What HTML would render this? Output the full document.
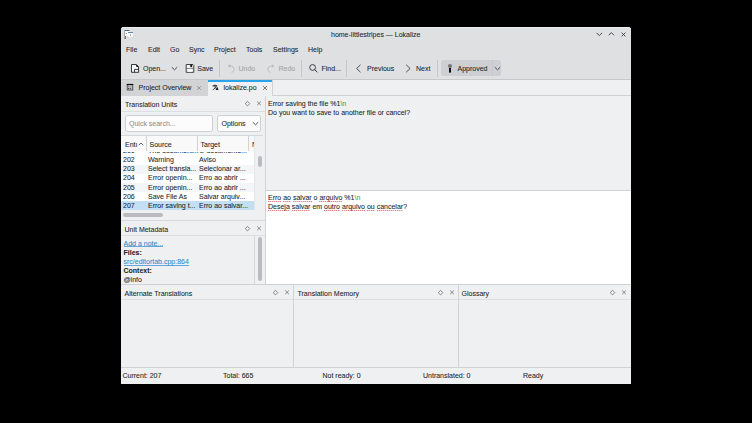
<!DOCTYPE html>
<html><head><meta charset="utf-8">
<style>
*{margin:0;padding:0;box-sizing:border-box}
html,body{width:752px;height:423px;background:#000;overflow:hidden}
body{font-family:"Liberation Sans",sans-serif;font-size:7px;color:#232629;position:relative}
.a{position:absolute}
.t{position:absolute;white-space:nowrap;line-height:9px;-webkit-text-stroke:0.07px currentColor}
.sp{padding-bottom:1px;background:repeating-linear-gradient(90deg,rgba(225,80,90,.7) 0 1px,rgba(225,80,90,.3) 1px 2px) 0 100%/100% 1px no-repeat}
.g{color:#a3a5a7}
.hl{position:absolute;height:1px;background:#d0d2d4}
.vl{position:absolute;width:1px;background:#d0d2d4}
.sep{position:absolute;width:1px;background:#c6c8ca;top:60px;height:17px}
svg{position:absolute;overflow:visible}
.lnk{color:#2f8bcb;text-decoration:none;background:linear-gradient(#5ea8dc,#5ea8dc) 0 7.5px/100% 1px no-repeat}
.b{font-weight:bold}
</style></head><body>
<!-- window -->
<div class="a" style="left:121px;top:27px;width:510px;height:357px;background:#eff0f1;border-radius:3px 3px 0 0"></div>
<!-- header -->
<div class="a" style="left:121px;top:27px;width:510px;height:52px;background:#dee0e2;border-radius:3px 3px 0 0;border-top:1px solid #eceded"></div>
<div class="hl" style="left:121px;top:79px;width:510px;background:#c6c8ca"></div>

<!-- app icon -->
<svg style="left:124px;top:29px" width="10" height="10" viewBox="0 0 10 10">
  <rect x="0.5" y="1" width="1.5" height="9" fill="#6e7378"/>
  <rect x="1" y="1" width="4.5" height="6" fill="#fcfcfc"/>
  <rect x="1" y="1" width="4.5" height="1" fill="#4d6a80"/>
  <rect x="4" y="3" width="5" height="5" fill="#fcfcfc"/>
  <rect x="4" y="3" width="5" height="1" fill="#5f8aa5"/>
  <rect x="2.2" y="4" width="0.8" height="1" fill="#777"/>
  <rect x="6" y="5.5" width="1" height="1.2" fill="#777"/>
</svg>
<div class="t" style="left:331px;top:30px">home-littlestripes — Lokalize</div>
<!-- window controls -->
<svg style="left:595px;top:31px" width="36" height="8" viewBox="0 0 36 8">
  <path d="M1.6 1.9 L4.3 4.6 L7 1.9" stroke="#404346" stroke-width="0.95" fill="none"/>
  <path d="M13.6 4.3 L16.3 1.6 L19 4.3" stroke="#404346" stroke-width="0.95" fill="none"/>
  <path d="M26.6 1.6 L30.4 5.4 M30.4 1.6 L26.6 5.4" stroke="#404346" stroke-width="0.95" fill="none"/>
</svg>

<!-- menu -->
<div class="t" style="left:126px;top:45px">File</div>
<div class="t" style="left:148px;top:45px">Edit</div>
<div class="t" style="left:170px;top:45px">Go</div>
<div class="t" style="left:189px;top:45px">Sync</div>
<div class="t" style="left:214px;top:45px">Project</div>
<div class="t" style="left:246px;top:45px">Tools</div>
<div class="t" style="left:273px;top:45px">Settings</div>
<div class="t" style="left:308px;top:45px">Help</div>

<!-- toolbar -->
<svg style="left:130px;top:63px" width="10" height="10" viewBox="0 0 10 10">
  <path d="M1.5 1.5 H6.3 L8.6 3.8 V9.3 H1.5 Z" stroke="#2a2d31" stroke-width="0.95" fill="#f6f7f7"/>
  <path d="M6 1.2 L8.9 4.1 L6.4 4.1 Z" fill="#111"/>
  <path d="M4.5 9.3 V6.4 H8.6" stroke="#2a2d31" stroke-width="0.95" fill="none"/>
</svg>
<div class="t" style="left:143px;top:64px">Open...</div>
<svg style="left:171px;top:66px" width="7" height="5" viewBox="0 0 7 5">
  <path d="M0.8 1.2 L3.5 3.8 L6.2 1.2" stroke="#3b3e42" stroke-width="0.9" fill="none"/>
</svg>
<svg style="left:185px;top:63px" width="10" height="10" viewBox="0 0 10 10">
  <path d="M1.2 1.5 H8 L8.8 2.3 V9.3 H1.2 Z" stroke="#404346" stroke-width="1" fill="#f0f1f2"/>
  <rect x="5.3" y="1.5" width="1.9" height="2.6" fill="#111"/>
  <rect x="1.2" y="5" width="7.6" height="0.8" fill="#55585b"/>
  <rect x="2.8" y="5.8" width="4.2" height="3" fill="#fafafa"/>
</svg>
<div class="t" style="left:197.3px;top:64px">Save</div>
<div class="sep" style="left:219px"></div>
<svg style="left:227px;top:64px" width="8" height="9" viewBox="0 0 8 9">
  <path d="M0.8 2 L3.1 0.2 L3.1 3.8 Z" fill="#b5b7b9"/>
  <path d="M3 2 C5.5 2 7.2 3.4 7.2 5.4 C7.2 7 6 8 4.6 8.3" stroke="#b5b7b9" stroke-width="0.9" fill="none"/>
</svg>
<div class="t g" style="left:238.5px;top:64px">Undo</div>
<svg style="left:267px;top:64px" width="8" height="9" viewBox="0 0 8 9">
  <path d="M7.2 2 L4.9 0.2 L4.9 3.8 Z" fill="#b5b7b9"/>
  <path d="M5 2 C2.5 2 0.8 3.4 0.8 5.4 C0.8 7 2 8 3.4 8.3" stroke="#b5b7b9" stroke-width="0.9" fill="none"/>
</svg>
<div class="t g" style="left:278.5px;top:64px">Redo</div>
<div class="sep" style="left:301px"></div>
<svg style="left:309px;top:64px" width="9" height="9" viewBox="0 0 9 9">
  <circle cx="3.6" cy="3.5" r="2.9" stroke="#232629" stroke-width="0.85" fill="none"/>
  <path d="M5.7 5.6 L8.3 8.2" stroke="#232629" stroke-width="0.95"/>
</svg>
<div class="t" style="left:321.5px;top:64px">Find...</div>
<div class="sep" style="left:346px"></div>
<svg style="left:355px;top:64px" width="7" height="9" viewBox="0 0 7 9">
  <path d="M5.5 0.8 L1.6 4.5 L5.5 8.2" stroke="#3b3e42" stroke-width="0.9" fill="none"/>
</svg>
<div class="t" style="left:367px;top:64px">Previous</div>
<svg style="left:405px;top:64px" width="7" height="9" viewBox="0 0 7 9">
  <path d="M1.2 0.8 L5.1 4.5 L1.2 8.2" stroke="#3b3e42" stroke-width="0.9" fill="none"/>
</svg>
<div class="t" style="left:416px;top:64px">Next</div>
<div class="sep" style="left:437px"></div>
<div class="a" style="left:440.5px;top:60px;width:60px;height:15.5px;background:#cdcfd2;border-radius:2.5px"></div>
<div class="a" style="left:492px;top:60px;width:1px;height:15.5px;background:#c4c6c9"></div>
<svg style="left:447px;top:63px" width="6" height="10" viewBox="0 0 6 10">
  <circle cx="3" cy="3" r="2.1" fill="#76797c"/>
  <rect x="2" y="5" width="2" height="4.6" fill="#0e0e0e"/>
</svg>
<div class="t" style="left:457.5px;top:64px">Approved</div>
<svg style="left:493.5px;top:66px" width="7" height="5" viewBox="0 0 7 5">
  <path d="M0.8 1.2 L3.5 3.8 L6.2 1.2" stroke="#3b3e42" stroke-width="0.9" fill="none"/>
</svg>

<!-- tabs -->
<div class="a" style="left:121px;top:80px;width:510px;height:15px;background:#eff0f1"></div>
<div class="hl" style="left:272px;top:95px;width:359px;background:#cfd1d3"></div>
<div class="a" style="left:121px;top:80px;width:86.5px;height:15.5px;background:#d1d3d5"></div>
<div class="a" style="left:207.5px;top:80px;width:65px;height:1.5px;background:#2ba3e8"></div>
<div class="vl" style="left:272px;top:80px;height:15px;background:#cfd1d3"></div>
<svg style="left:126px;top:83px" width="8" height="8" viewBox="0 0 8 8">
  <rect x="1.2" y="1.4" width="5.6" height="5.6" fill="#c4c6c8" stroke="#3a3d40" stroke-width="0.8"/>
  <rect x="0.8" y="0.9" width="6.4" height="1.2" fill="#0c0c0c"/>
  <rect x="2.2" y="3.3" width="1" height="1" fill="#55585b"/>
  <rect x="4.2" y="3.3" width="1.6" height="0.8" fill="#8a8c8f"/>
  <rect x="2" y="5" width="1.2" height="1" fill="#3a3d40"/>
  <rect x="4" y="5" width="1.2" height="1" fill="#55585b"/>
</svg>
<div class="t" style="left:138.5px;top:82.5px">Project Overview</div>
<svg style="left:196px;top:85px" width="6" height="6" viewBox="0 0 6 6">
  <path d="M1 1 L5 5 M5 1 L1 5" stroke="#8d9093" stroke-width="0.8"/>
</svg>
<svg style="left:211px;top:84px" width="10" height="9" viewBox="0 0 10 9">
  <path d="M1.6 1.8 H6.2" stroke="#1a1c1f" stroke-width="1.1"/>
  <path d="M3.9 0.6 V1.8" stroke="#1a1c1f" stroke-width="0.8"/>
  <path d="M5.2 2 C4.6 3.6 3.4 5 1.8 5.8" stroke="#1a1c1f" stroke-width="0.9" fill="none"/>
  <path d="M3 2.6 C3.6 3.6 4.3 4.2 5.2 4.6" stroke="#55585b" stroke-width="0.6" fill="none"/>
  <path d="M4.6 6 L6.1 2.6 L7.6 6 Z" fill="#1a1c1f"/>
</svg>
<div class="t" style="left:223.5px;top:82.5px">lokalize.po</div>
<svg style="left:261.5px;top:85px" width="6" height="6" viewBox="0 0 6 6">
  <path d="M1 1 L5 5 M5 1 L1 5" stroke="#5b5e62" stroke-width="0.8"/>
</svg>

<!-- left dock: translation units -->
<div class="t" style="left:125px;top:100px">Translation Units</div>
<svg style="left:244px;top:100px" width="7" height="7" viewBox="0 0 7 7">
  <path d="M3.5 1.3 L5.8 3.6 L3.5 5.9 L1.2 3.6 Z" stroke="#6a6d70" stroke-width="0.8" fill="none"/>
</svg>
<svg style="left:256px;top:100px" width="6" height="7" viewBox="0 0 6 7">
  <path d="M1.2 1.5 L4.9 5.2 M4.9 1.5 L1.2 5.2" stroke="#6a6d70" stroke-width="0.8"/>
</svg>
<div class="hl" style="left:121px;top:111px;width:144px;background:#dcdee0"></div>
<div class="a" style="left:124.5px;top:115px;width:88px;height:16.5px;background:#fcfcfc;border:1px solid #cdd0d2;border-radius:2.5px"></div>
<div class="t" style="left:129px;top:119px;color:#8c8f92">Quick search...</div>
<div class="a" style="left:216.5px;top:115px;width:44.5px;height:16.5px;background:#fcfcfc;border:1px solid #cdd0d2;border-radius:2.5px"></div>
<div class="t" style="left:221.5px;top:119px">Options</div>
<svg style="left:251.5px;top:121px" width="7" height="5" viewBox="0 0 7 5">
  <path d="M0.8 1.2 L3.5 3.8 L6.2 1.2" stroke="#3b3e42" stroke-width="0.9" fill="none"/>
</svg>
<!-- table -->
<div class="a" style="left:121px;top:135px;width:134px;height:75px;background:#ffffff"></div>
<div class="hl" style="left:121px;top:135px;width:142px;background:#d6d8da"></div>
<div class="a" style="left:121px;top:136px;width:133px;height:15px;background:#f9f9fa"></div>
<div class="vl" style="left:146px;top:136px;height:15px"></div>
<div class="vl" style="left:197px;top:136px;height:15px"></div>
<div class="vl" style="left:248px;top:136px;height:15px"></div>
<div class="t" style="left:125px;top:140px">Entı</div>
<svg style="left:138px;top:142px" width="6" height="4" viewBox="0 0 6 4">
  <path d="M0.8 3.2 L3 1 L5.2 3.2" stroke="#3b3e42" stroke-width="0.8" fill="none"/>
</svg>
<div class="t" style="left:149.5px;top:140px">Source</div>
<div class="t" style="left:200.5px;top:140px">Target</div>
<div class="a" style="left:249px;top:136px;width:6px;height:15px;overflow:hidden"><div class="t" style="left:3px;top:4px">N</div></div>
<!-- rows -->
<div class="a" style="left:121px;top:164.5px;width:134px;height:9px;background:#f4f5f6"></div>
<div class="a" style="left:121px;top:182.5px;width:134px;height:9px;background:#f4f5f6"></div>
<div class="a" style="left:121px;top:201px;width:134px;height:9px;background:#c2dff4"></div>
<div class="vl" style="left:254px;top:136px;height:74px;background:#e4e5e6"></div>
<div class="a" style="left:121px;top:152px;width:133px;height:2px;overflow:hidden">
  <div class="t" style="left:2px;top:-6px">201</div>
  <div class="t" style="left:27px;top:-6px">The document...</div>
  <div class="t" style="left:78px;top:-6px">O documento...</div>
</div>
<div class="t" style="left:123px;top:155px">202</div><div class="t" style="left:148px;top:155px">Warning</div><div class="t" style="left:199px;top:155px">Aviso</div>
<div class="t" style="left:123px;top:164.2px">203</div><div class="t" style="left:148px;top:164.2px">Select transla...</div><div class="t" style="left:199px;top:164.2px">Selecionar ar...</div>
<div class="t" style="left:123px;top:173.4px">204</div><div class="t" style="left:148px;top:173.4px">Error openin...</div><div class="t" style="left:199px;top:173.4px">Erro ao abrir ...</div>
<div class="t" style="left:123px;top:182.6px">205</div><div class="t" style="left:148px;top:182.6px">Error openin...</div><div class="t" style="left:199px;top:182.6px">Erro ao abrir ...</div>
<div class="t" style="left:123px;top:191.8px">206</div><div class="t" style="left:148px;top:191.8px">Save File As</div><div class="t" style="left:199px;top:191.8px">Salvar arquiv...</div>
<div class="t" style="left:123px;top:201px">207</div><div class="t" style="left:148px;top:201px">Error saving t...</div><div class="t" style="left:199px;top:201px">Erro ao salvar...</div>
<!-- v scrollbar -->
<div class="a" style="left:258px;top:156px;width:3.5px;height:11px;background:#b9bbbe;border-radius:2px"></div>
<!-- h scrollbar -->
<div class="a" style="left:123px;top:213px;width:39.5px;height:3.5px;background:#b9bbbe;border-radius:2px"></div>
<div class="hl" style="left:121px;top:220px;width:144px;background:#d6d8da"></div>

<!-- unit metadata -->
<div class="t" style="left:124.5px;top:224.5px">Unit Metadata</div>
<svg style="left:244px;top:225px" width="7" height="7" viewBox="0 0 7 7">
  <path d="M3.5 1.3 L5.8 3.6 L3.5 5.9 L1.2 3.6 Z" stroke="#6a6d70" stroke-width="0.8" fill="none"/>
</svg>
<svg style="left:256px;top:225px" width="6" height="7" viewBox="0 0 6 7">
  <path d="M1.2 1.5 L4.9 5.2 M4.9 1.5 L1.2 5.2" stroke="#6a6d70" stroke-width="0.8"/>
</svg>
<div class="hl" style="left:121px;top:235px;width:144px;background:#dcdee0"></div>
<div class="vl" style="left:254px;top:236px;height:48px;background:#d6d8da"></div>
<div class="a" style="left:258px;top:237px;width:3.7px;height:44px;background:#b9bbbe;border-radius:2px"></div>
<div class="t lnk" style="left:123.5px;top:238.5px">Add a note...</div>
<div class="t b" style="left:123.5px;top:247.8px">Files:</div>
<div class="t lnk" style="left:123.5px;top:257px">src/editortab.cpp:864</div>
<div class="t b" style="left:123.5px;top:266px">Context:</div>
<div class="t" style="left:123.5px;top:275px">@info</div>

<!-- editor -->
<div class="vl" style="left:265px;top:96px;height:188px;background:#d0d2d4"></div>
<div class="t" style="left:268px;top:99px">Error saving the file %1<span style="color:#27ae60">\n</span></div>
<div class="t" style="left:268px;top:107.7px">Do you want to save to another file or cancel?</div>
<div class="a" style="left:266px;top:190px;width:365px;height:94px;background:#ffffff"></div>
<div class="hl" style="left:266px;top:190px;width:365px;background:#cfd1d3"></div>
<div class="t" style="left:268px;top:193.2px"><span class="sp">Erro</span> <span class="sp">ao</span> <span class="sp">salvar</span> o <span class="sp">arquivo</span> %1<span style="color:#27ae60">\n</span></div>
<div class="t" style="left:268px;top:202px"><span class="sp">Deseja</span> <span class="sp">salvar</span> em <span class="sp">outro</span> <span class="sp">arquivo</span> <span class="sp">ou</span> <span class="sp">cancelar</span>?</div>

<!-- bottom docks -->
<div class="hl" style="left:121px;top:284px;width:510px;background:#cfd1d3"></div>
<div class="hl" style="left:121px;top:299px;width:510px;background:#dcdee0"></div>
<div class="vl" style="left:293px;top:285px;height:82px"></div>
<div class="vl" style="left:458px;top:285px;height:82px"></div>
<div class="t" style="left:124.5px;top:289px">Alternate Translations</div>
<div class="t" style="left:297.5px;top:289px">Translation Memory</div>
<div class="t" style="left:461.5px;top:289px">Glossary</div>
<svg style="left:272px;top:289px" width="7" height="7" viewBox="0 0 7 7">
  <path d="M3.5 1.3 L5.8 3.6 L3.5 5.9 L1.2 3.6 Z" stroke="#6a6d70" stroke-width="0.8" fill="none"/>
</svg>
<svg style="left:284px;top:289px" width="6" height="7" viewBox="0 0 6 7">
  <path d="M1.2 1.5 L4.9 5.2 M4.9 1.5 L1.2 5.2" stroke="#6a6d70" stroke-width="0.8"/>
</svg>
<svg style="left:437px;top:289px" width="7" height="7" viewBox="0 0 7 7">
  <path d="M3.5 1.3 L5.8 3.6 L3.5 5.9 L1.2 3.6 Z" stroke="#6a6d70" stroke-width="0.8" fill="none"/>
</svg>
<svg style="left:449px;top:289px" width="6" height="7" viewBox="0 0 6 7">
  <path d="M1.2 1.5 L4.9 5.2 M4.9 1.5 L1.2 5.2" stroke="#6a6d70" stroke-width="0.8"/>
</svg>
<svg style="left:609px;top:289px" width="7" height="7" viewBox="0 0 7 7">
  <path d="M3.5 1.3 L5.8 3.6 L3.5 5.9 L1.2 3.6 Z" stroke="#6a6d70" stroke-width="0.8" fill="none"/>
</svg>
<svg style="left:621px;top:289px" width="6" height="7" viewBox="0 0 6 7">
  <path d="M1.2 1.5 L4.9 5.2 M4.9 1.5 L1.2 5.2" stroke="#6a6d70" stroke-width="0.8"/>
</svg>

<!-- status bar -->
<div class="hl" style="left:121px;top:367px;width:510px;background:#d0d2d4"></div>
<div class="t" style="left:122.5px;top:371px">Current: 207</div>
<div class="t" style="left:223px;top:371px">Total: 665</div>
<div class="t" style="left:322.5px;top:371px">Not ready: 0</div>
<div class="t" style="left:423px;top:371px">Untranslated: 0</div>
<div class="t" style="left:523px;top:371px">Ready</div>
</body></html>
